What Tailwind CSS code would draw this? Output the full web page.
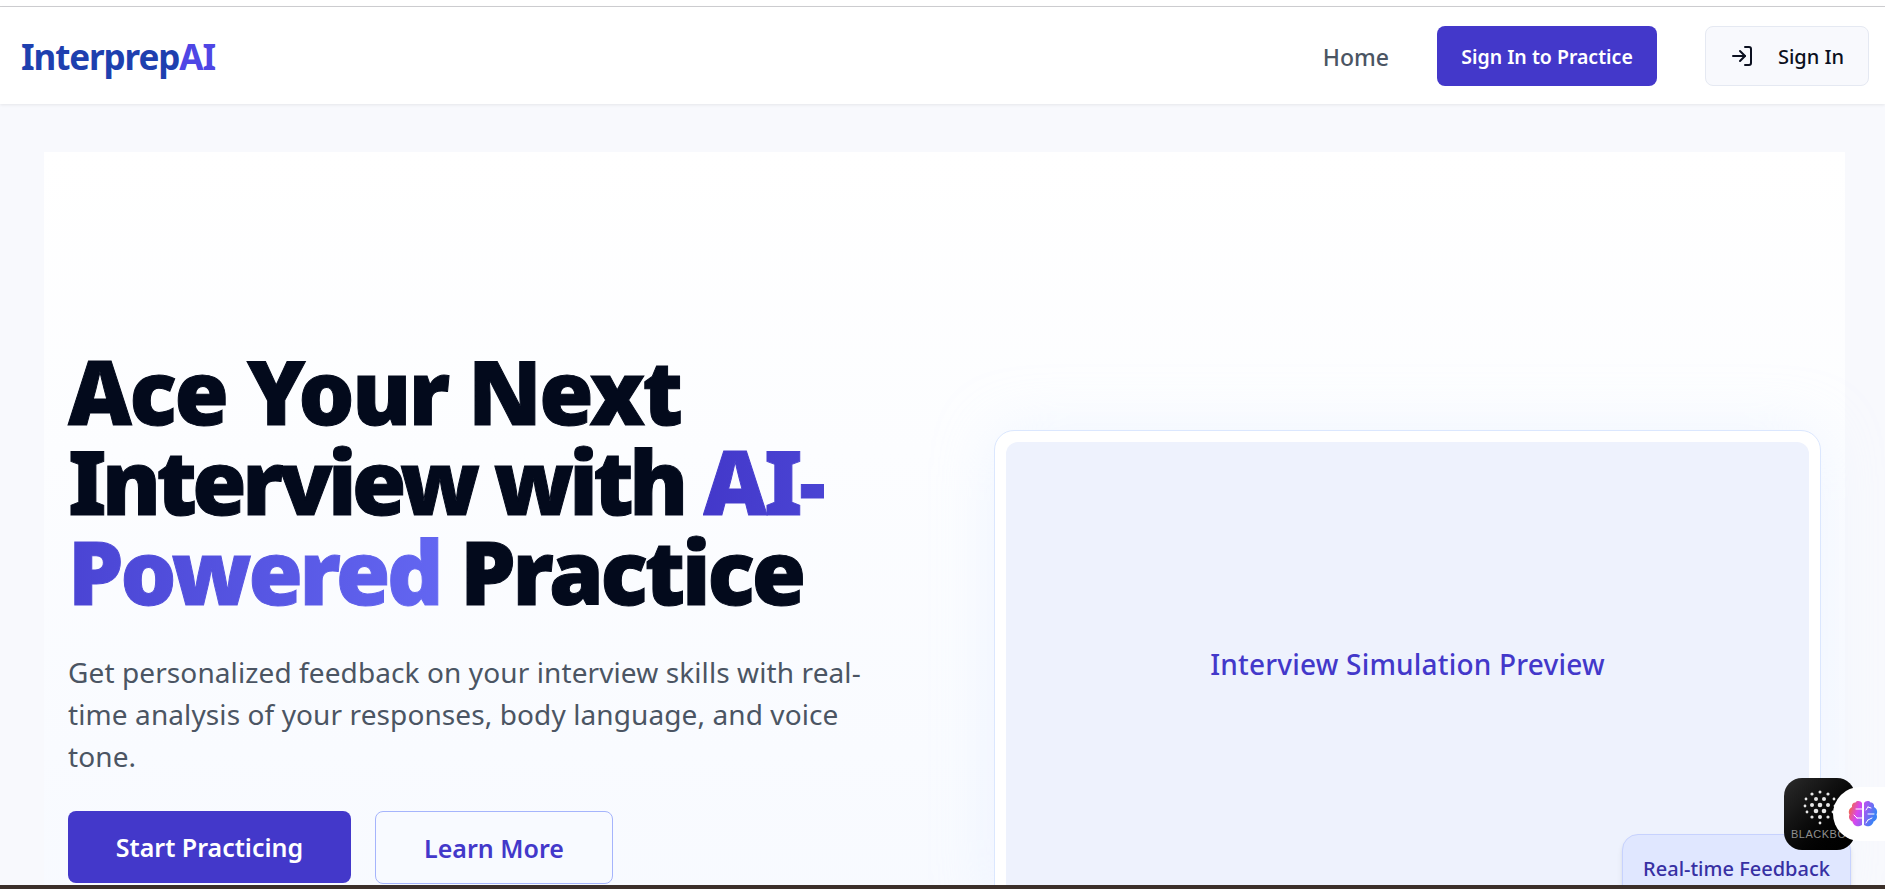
<!DOCTYPE html>
<html lang="en">
<head>
    <meta charset="UTF-8">
    <meta name="viewport" content="width=device-width, initial-scale=1.0">
    <title>InterprepAI</title>
    <script src="https://cdn.jsdelivr.net/npm/@tailwindcss/browser@4"></script>
</head>
<body class="h-screen overflow-hidden flex flex-col bg-[#f8f9fd] font-['Noto_Sans',sans-serif] relative">
    <!-- browser edge -->
    <div class="h-[7px] shrink-0 bg-white border-b border-[#cfcfd2]"></div>

    <!-- navbar -->
    <header class="h-[97px] shrink-0 bg-white shadow-[0_1px_3px_rgba(0,0,0,0.08)] flex items-center justify-between pl-[21px] pr-4 relative z-10">
        <a class="text-[35px] font-bold tracking-[-1.1px] text-[#1e40af] pt-[3px]">Interprep<span class="text-[#4f46e5]">AI</span></a>
        <nav class="flex items-center">
            <a class="text-[23px] font-medium text-[#4b5563] mr-12 pt-[3px]">Home</a>
            <button class="h-[60px] w-[220px] rounded-lg bg-[#4338ca] text-white text-[19.5px] font-semibold mr-12 pt-[3px]">Sign In to Practice</button>
            <button class="h-[60px] w-[164px] rounded-lg bg-[#f8f9fd] border border-[#e5e9f2] text-[#0b1020] text-[20px] font-medium flex items-center justify-center gap-6">
                <svg class="w-6 h-6" viewBox="0 0 24 24" fill="none" stroke="currentColor" stroke-width="2" stroke-linecap="round" stroke-linejoin="round"><path d="M15 3h4a2 2 0 0 1 2 2v14a2 2 0 0 1-2 2h-4"/><polyline points="10 17 15 12 10 7"/><line x1="15" y1="12" x2="3" y2="12"/></svg>
                <span class="pt-[3px]">Sign In</span>
            </button>
        </nav>
    </header>

    <!-- hero -->
    <main class="flex-1 min-h-0 overflow-hidden pl-[44px] pr-[40px] pt-[48px]">
        <section class="h-[900px] bg-linear-to-b from-white to-[#f6f9ff] grid grid-cols-[926px_1fr] pl-6 pr-6">
            <div class="pt-[194px]">
                <h1 class="text-[88px] leading-[90px] font-black tracking-[-3.2px] [-webkit-text-stroke:1px_#030a1c] text-[#030a1c]"><span class="tracking-[-2.4px]">Ace Your Next</span> <span class="tracking-[-4.6px]">Interview with</span> <span class="bg-linear-to-r from-[#4338ca] to-[#6366f1] bg-clip-text text-transparent [-webkit-text-stroke:1px_transparent]">AI-Powered</span> Practice</h1>
                <p class="mt-[35px] w-[800px] text-[28px] tracking-[0.1px] leading-[42px] text-[#4b5563]">Get personalized feedback on your interview skills with real-time analysis of your responses, body language, and voice tone.</p>
                <div class="mt-[34px] flex gap-6">
                    <button class="h-[72px] w-[283px] rounded-lg bg-[#4338ca] text-white text-[25px] font-semibold pt-[2px]">Start Practicing</button>
                    <button class="h-[73px] w-[238px] rounded-lg bg-[#f8faff] border border-[#a5b4fc] text-[#4338ca] text-[25px] font-semibold pt-[3px]">Learn More</button>
                </div>
            </div>
            <div class="pt-[278px] relative">
                <div class="h-[480px] bg-white rounded-[20px] border border-[#dbe7fe] p-[11px] shadow-[0_0_60px_rgba(219,231,254,0.35)]">
                    <div class="h-full rounded-xl bg-[#eef2fd] pb-[13px] flex items-center justify-center">
                        <span class="text-[28px] tracking-[0.2px] font-medium text-[#4338ca]">Interview Simulation Preview</span>
                    </div>
                </div>
                <div class="absolute left-[628px] top-[682px] w-[229px] h-[70px] rounded-2xl bg-[#e0e7ff] border border-[#c7d2fe] pt-[19px] text-center text-[20px] font-medium text-[#3730a3] shadow-md">Real-time Feedback</div>
            </div>
        </section>
    </main>

    <!-- bottom edge -->
    <div class="h-1 shrink-0 bg-[#3b2f2a] relative z-20"></div>

    <!-- floating extensions -->
    <div class="absolute left-[1784px] top-[778px] w-[71px] h-[72px] rounded-[18px] bg-linear-to-br from-[#2c2c2c] to-black overflow-hidden z-30 flex flex-col items-start">
        <svg class="mt-[11px] ml-[18px] w-[36px] h-[36px]" viewBox="0 0 36 36" fill="#e8e8e8">
            <circle cx="18" cy="3" r="1.5"/><circle cx="10" cy="5" r="1.6"/><circle cx="26" cy="5" r="1.6"/>
            <circle cx="4" cy="10" r="1.4"/><circle cx="14" cy="10" r="2"/><circle cx="22" cy="10" r="2"/><circle cx="32" cy="10" r="1.4"/>
            <circle cx="3" cy="17" r="1.4"/><circle cx="10" cy="16" r="2"/><circle cx="18" cy="16" r="2.300"/><circle cx="26" cy="16" r="2"/><circle cx="33" cy="17" r="1.4"/>
            <circle cx="5" cy="23" r="1.4"/><circle cx="14" cy="22" r="2.300"/><circle cx="22" cy="22" r="2.300"/><circle cx="31" cy="23" r="1.4"/>
            <circle cx="10" cy="28" r="1.6"/><circle cx="18" cy="28" r="2"/><circle cx="26" cy="28" r="1.6"/><circle cx="18" cy="34" r="1.4"/>
        </svg>
        <span class="mt-[3px] ml-[7px] text-[11px] leading-[12px] tracking-[0.5px] text-[#8f8f8f] whitespace-nowrap font-['Liberation_Sans',sans-serif]">BLACKBOX</span>
    </div>
    <div class="absolute left-[1833px] top-[787px] w-[52px] h-[54px] rounded-l-[27px] bg-white z-40 flex items-center justify-center">
        <svg class="w-[30px] h-[28px] ml-[8px]" viewBox="0 0 30 28" fill="none">
            <defs><linearGradient id="brainFill" x1="0" y1="0" x2="1" y2="0.3"><stop offset="0" stop-color="#f97316"/><stop offset="0.4" stop-color="#d946ef"/><stop offset="1" stop-color="#3b82f6"/></linearGradient></defs>
            <path fill="url(#brainFill)" d="M14 3C13 1 9 0 7.500 2.500C5 2.500 3.500 4.500 4 7C1 8.500 0 12 1.500 14.500C0 17.500 2 21 4.500 21.500C5 25 9 28 14 25ZM16 3C17 1 21 0 22.500 2.500C25 2.500 26.500 4.500 26 7C29 8.500 30 12 28.500 14.500C30 17.500 28 21 25.500 21.500C25 25 21 28 16 25Z"/>
            <path stroke="white" stroke-width="1" stroke-linecap="round" d="M14 9H8M14 18H9M9 18L6 15M20 7L18 10M20 7L23 8M20 14H26M20 20L24 18M20 20L18 23"/>
        </svg>
    </div>
</body>
</html>
